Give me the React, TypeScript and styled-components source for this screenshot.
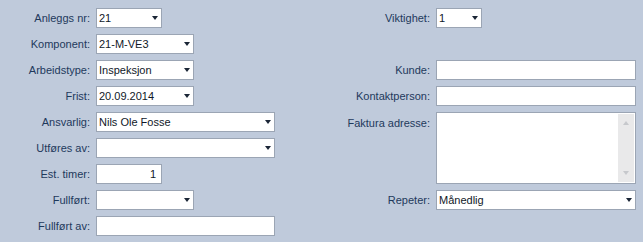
import React from "react";
import styled, { createGlobalStyle } from "styled-components";

const Global = createGlobalStyle`
  html, body { margin: 0; padding: 0; background: #bfcadb; }
  body { font-family: "Liberation Sans", Arial, sans-serif; font-size: 11px; }
`;

const Form = styled.div`
  display: grid;
  grid-template-columns: 90px 180px 148px 200px;
  grid-auto-rows: 20px;
  column-gap: 6px;
  row-gap: 6px;
  padding-top: 8px;
  width: 643px;
  height: 242px;
  box-sizing: border-box;
  background: #bfcadb;
`;

const Label = styled.div<{ $col: number; $row: number; $top?: boolean }>`
  grid-column: ${(p) => p.$col};
  grid-row: ${(p) => p.$row};
  display: flex;
  justify-content: flex-end;
  align-items: ${(p) => (p.$top ? "flex-start" : "center")};
  padding-top: ${(p) => (p.$top ? "5px" : "0")};
  color: #1e395b;
  white-space: nowrap;
`;

const Field = styled.div<{ $col: number; $row: number; $w: number; $span?: number; $right?: boolean }>`
  grid-column: ${(p) => p.$col};
  grid-row: ${(p) => p.$row} / span ${(p) => p.$span ?? 1};
  width: ${(p) => p.$w}px;
  box-sizing: border-box;
  background: #ffffff;
  border: 1px solid #9ba5b4;
  display: flex;
  align-items: center;
  justify-content: ${(p) => (p.$right ? "flex-end" : "flex-start")};
  padding: 0 ${(p) => (p.$right ? "5px" : "0")} 0 2px;
  color: #101828;
  position: relative;
`;

const Value = styled.span`
  flex: 1;
  white-space: nowrap;
  overflow: hidden;
`;

const Arrow = styled.span`
  width: 0;
  height: 0;
  margin-right: 3px;
  border-left: 3.5px solid transparent;
  border-right: 3.5px solid transparent;
  border-top: 4px solid #1b2636;
`;

const Scroll = styled.div`
  position: absolute;
  top: 1px;
  right: 1px;
  bottom: 1px;
  width: 16px;
  background: #e9e9ea;
  display: flex;
  flex-direction: column;
  justify-content: space-between;
  align-items: center;
  padding: 7px 0;
  box-sizing: border-box;
`;

const ScrollArrow = styled.span<{ $up?: boolean }>`
  width: 0;
  height: 0;
  border-left: 3.5px solid transparent;
  border-right: 3.5px solid transparent;
  ${(p) => (p.$up ? "border-bottom: 4px solid #c6c8cc;" : "border-top: 4px solid #c6c8cc;")}
`;

type Combo = { col: number; row: number; w: number; value?: string };

const ComboBox = ({ col, row, w, value = "" }: Combo) => (
  <Field $col={col} $row={row} $w={w}>
    <Value>{value}</Value>
    <Arrow />
  </Field>
);

export default function App() {
  return (
    <>
      <Global />
      <Form>
        <Label $col={1} $row={1}>Anleggs nr:</Label>
        <ComboBox col={2} row={1} w={66} value="21" />
        <Label $col={3} $row={1}>Viktighet:</Label>
        <ComboBox col={4} row={1} w={46} value="1" />

        <Label $col={1} $row={2}>Komponent:</Label>
        <ComboBox col={2} row={2} w={98} value="21-M-VE3" />

        <Label $col={1} $row={3}>Arbeidstype:</Label>
        <ComboBox col={2} row={3} w={98} value="Inspeksjon" />
        <Label $col={3} $row={3}>Kunde:</Label>
        <Field $col={4} $row={3} $w={200} />

        <Label $col={1} $row={4}>Frist:</Label>
        <ComboBox col={2} row={4} w={98} value="20.09.2014" />
        <Label $col={3} $row={4}>Kontaktperson:</Label>
        <Field $col={4} $row={4} $w={200} />

        <Label $col={1} $row={5}>Ansvarlig:</Label>
        <ComboBox col={2} row={5} w={179} value="Nils Ole Fosse" />
        <Label $col={3} $row={5} $top>Faktura adresse:</Label>
        <Field $col={4} $row={5} $w={200} $span={3}>
          <Scroll>
            <ScrollArrow $up />
            <ScrollArrow />
          </Scroll>
        </Field>

        <Label $col={1} $row={6}>Utføres av:</Label>
        <ComboBox col={2} row={6} w={179} />

        <Label $col={1} $row={7}>Est. timer:</Label>
        <Field $col={2} $row={7} $w={66} $right>1</Field>

        <Label $col={1} $row={8}>Fullført:</Label>
        <ComboBox col={2} row={8} w={98} />
        <Label $col={3} $row={8}>Repeter:</Label>
        <ComboBox col={4} row={8} w={200} value="Månedlig" />

        <Label $col={1} $row={9}>Fullført av:</Label>
        <Field $col={2} $row={9} $w={179} />
      </Form>
    </>
  );
}
